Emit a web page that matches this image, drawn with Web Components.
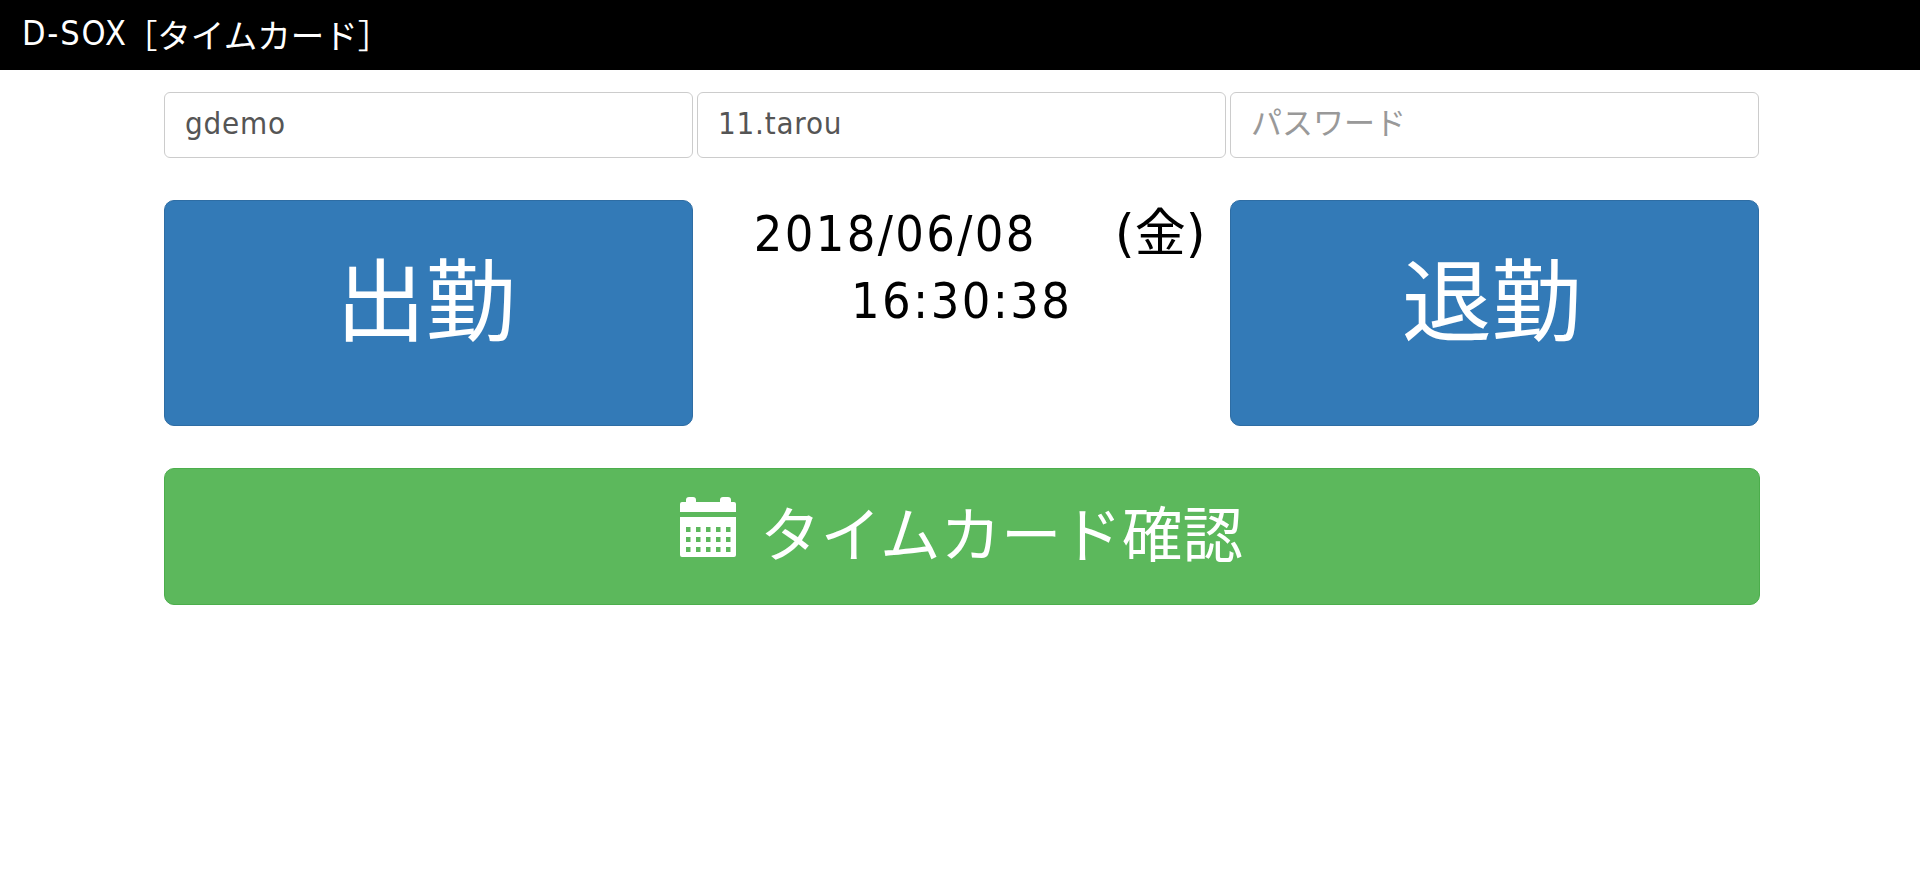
<!DOCTYPE html>
<html lang="ja">
<head>
<meta charset="utf-8">
<title>D-SOX</title>
<style>
  html, body { margin: 0; padding: 0; background: #fff; }
</style>
</head>
<body>
<tc-header><span slot="brand">D-SOX</span>［タイムカード］</tc-header>
<tc-page>
  <tc-input value="gdemo"></tc-input>
  <tc-input value="11.tarou"></tc-input>
  <tc-input placeholder="パスワード"></tc-input>
  <tc-button kind="primary">出勤</tc-button>
  <tc-clock date="2018/06/08" day="(金)" time="16:30:38"></tc-clock>
  <tc-button kind="primary">退勤</tc-button>
  <tc-button slot="wide" kind="success" icon>タイムカード確認</tc-button>
</tc-page>
<script>
const FONT = '"DejaVu Sans", "Noto Sans CJK JP", sans-serif';

class TcHeader extends HTMLElement {
  constructor() {
    super();
    this.attachShadow({ mode: 'open' });
    this.shadowRoot.innerHTML = `
      <style>
        :host { display: flex; align-items: center; height: 70px; box-sizing: border-box; padding: 0 0 4px 22px;
          background: #000; color: #fff; font: 33.5px ${FONT}; white-space: nowrap; }
        .brand { font-size: 34px; font-stretch: condensed; letter-spacing: 1.8px; margin-right: -4px; }
      </style>
      <span class="brand"><slot name="brand"></slot></span>
      <slot></slot>`;
  }
}

class TcPage extends HTMLElement {
  constructor() {
    super();
    this.attachShadow({ mode: 'open' });
    this.shadowRoot.innerHTML = `
      <style>
        :host { display: block; width: 1596px; margin: 22px 0 0 164px; }
        .grid { display: grid; grid-template-columns: repeat(3, 529.33px); gap: 42px 3.67px; }
        .wide { margin-top: 42px; }
      </style>
      <div class="grid"><slot></slot></div>
      <div class="wide"><slot name="wide"></slot></div>`;
  }
}

class TcInput extends HTMLElement {
  constructor() {
    super();
    this.attachShadow({ mode: 'open' });
    this.shadowRoot.innerHTML = `
      <style>
        :host { display: block; }
        input { display: block; box-sizing: border-box; width: 100%; height: 66px; padding: 0 20px 4px;
          border: 1px solid #ccc; border-radius: 6px; background: #fff; color: #555;
          font: 31px ${FONT}; font-stretch: condensed; letter-spacing: .8px; outline: 0; }
        input::placeholder { color: #999; opacity: 1; letter-spacing: 0; }
      </style>
      <input type="text">`;
  }
  connectedCallback() {
    const input = this.shadowRoot.querySelector('input');
    input.value = this.getAttribute('value') || '';
    input.placeholder = this.getAttribute('placeholder') || '';
  }
}

class TcButton extends HTMLElement {
  constructor() {
    super();
    this.attachShadow({ mode: 'open' });
    this.shadowRoot.innerHTML = `
      <style>
        :host { display: block; }
        .btn { display: flex; align-items: center; justify-content: center; gap: 24px;
          box-sizing: border-box; width: 100%; height: 226px; padding: 0 6px 36px 0; border: 1px solid #2e6da4;
          border-radius: 10px; background: #337ab7; color: #fff; font: 90px "Noto Sans CJK JP", sans-serif; cursor: pointer; }
        :host([kind="success"]) .btn { height: 137px; padding: 0 1px 12px 0; background: #5cb85c; border-color: #4cae4c; font-size: 60.5px; }
        svg { display: none; width: 56px; height: 60px; margin-top: -8px; fill: #fff; }
        :host([icon]) svg { display: block; }
      </style>
      <div class="btn" role="button">
        <svg viewBox="0 0 56 60" aria-hidden="true">
          <path d="M6 5V3q0-3 3-3h4q3 0 3 3v2h24V3q0-3 3-3h5q3 0 3 3v2h3q2 0 2 2v8H0V7q0-2 2-2z"/>
          <path fill-rule="evenodd" d="M0 20h56v38q0 2-2 2H2q-2 0-2-2zM6 30v5h4.500v-5zm10 0v5h4.500v-5zm10 0v5h4.500v-5zm10 0v5h4.500v-5zm10 0v5h4.500v-5zM6 40v5h4.500v-5zm10 0v5h4.500v-5zm10 0v5h4.500v-5zm10 0v5h4.500v-5zm10 0v5h4.500v-5zM6 50v5h4.500v-5zm10 0v5h4.500v-5zm10 0v5h4.500v-5zm10 0v5h4.500v-5zm10 0v5h4.500v-5z"/>
        </svg>
        <slot></slot>
      </div>`;
  }
}

class TcClock extends HTMLElement {
  constructor() {
    super();
    this.attachShadow({ mode: 'open' });
    this.shadowRoot.innerHTML = `
      <style>
        :host { display: block; text-align: center; color: #000; font: 50px/67px ${FONT}; }
        .date { padding-left: 36px; white-space: nowrap; }
        .num { font-stretch: condensed; letter-spacing: 2.400px; }
        .day { margin-left: 78px; font-size: 51px; }
      </style>
      <div class="date"><span class="num"></span><span class="day"></span></div>
      <div class="time num"></div>`;
  }
  connectedCallback() {
    const root = this.shadowRoot;
    root.querySelector('.date .num').textContent = this.getAttribute('date');
    root.querySelector('.day').textContent = this.getAttribute('day');
    root.querySelector('.time').textContent = this.getAttribute('time');
  }
}

customElements.define('tc-header', TcHeader);
customElements.define('tc-page', TcPage);
customElements.define('tc-input', TcInput);
customElements.define('tc-button', TcButton);
customElements.define('tc-clock', TcClock);
</script>
</body>
</html>
